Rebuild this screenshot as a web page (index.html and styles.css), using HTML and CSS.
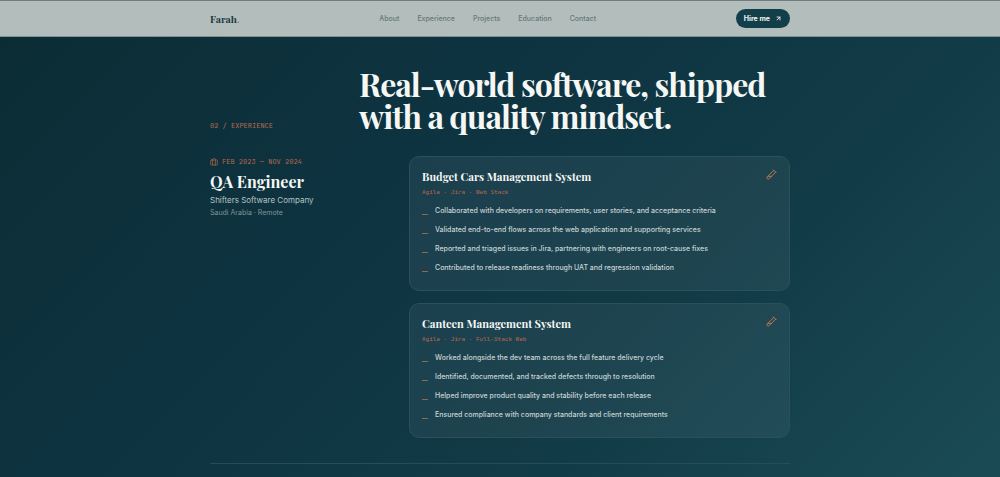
FILE: index.html
```html
<!DOCTYPE html>
<html lang="en">
<head>
    <meta charset="UTF-8">
    <meta name="viewport" content="width=device-width, initial-scale=1.0">
    <title>Farah</title>
    <link rel="stylesheet" href="styles.css">
</head>
<body>

    <header class="topbar">
        <div class="container topbar-inner">
            <a class="logo" href="#">Farah<span>.</span></a>
            <nav class="nav">
                <a href="#about">About</a>
                <a href="#experience">Experience</a>
                <a href="#projects">Projects</a>
                <a href="#education">Education</a>
                <a href="#contact">Contact</a>
            </nav>
            <a class="hire" href="#contact">Hire me
                <svg viewBox="0 0 24 24"><path d="M7 17 17 7M7 7h10v10"/></svg>
            </a>
        </div>
    </header>

    <main class="container" id="experience">
        <div class="section-head">
            <p class="mono">02 / EXPERIENCE</p>
            <h2>Real-world software, shipped<br>with a quality mindset.</h2>
        </div>

        <section class="job">
            <div class="job-info">
                <p class="mono date">
                    <svg viewBox="0 0 24 24"><rect x="2" y="6" width="20" height="15" rx="2"/><path d="M8 21V4a2 2 0 0 1 2-2h4a2 2 0 0 1 2 2v17"/></svg>
                    FEB 2023 — NOV 2024
                </p>
                <h3>QA Engineer</h3>
                <p class="company">Shifters Software Company</p>
                <p class="place">Saudi Arabia · Remote</p>
            </div>

            <div class="cards">
                <article class="card">
                    <div class="card-head">
                        <h4>Budget Cars Management System</h4>
                        <svg class="tube" viewBox="0 0 24 24"><path d="M21 7 6.800 21.200a2.800 2.800 0 0 1-4-4L17 3M16 2l6 6M12 16H4"/></svg>
                    </div>
                    <p class="tags">Agile · Jira · Web Stack</p>
                    <ul>
                        <li>Collaborated with developers on requirements, user stories, and acceptance criteria</li>
                        <li>Validated end-to-end flows across the web application and supporting services</li>
                        <li>Reported and triaged issues in Jira, partnering with engineers on root-cause fixes</li>
                        <li>Contributed to release readiness through UAT and regression validation</li>
                    </ul>
                </article>

                <article class="card">
                    <div class="card-head">
                        <h4>Canteen Management System</h4>
                        <svg class="tube" viewBox="0 0 24 24"><path d="M21 7 6.800 21.200a2.800 2.800 0 0 1-4-4L17 3M16 2l6 6M12 16H4"/></svg>
                    </div>
                    <p class="tags">Agile · Jira · Full-Stack Web</p>
                    <ul>
                        <li>Worked alongside the dev team across the full feature delivery cycle</li>
                        <li>Identified, documented, and tracked defects through to resolution</li>
                        <li>Helped improve product quality and stability before each release</li>
                        <li>Ensured compliance with company standards and client requirements</li>
                    </ul>
                </article>
            </div>
        </section>
    </main>

</body>
</html>
```
FILE: styles.css
```css
* {
    box-sizing: border-box;
}

body, h2, h3, h4, p, ul {
    margin: 0;
    padding: 0;
}

body {
    min-height: 100vh;
    font-family: Inter, sans-serif;
    font-size: 7px;
    color: #c8d4d5;
    background: linear-gradient(135deg, #0b2c33 0%, #0e3340 35%, #113946 65%, #1a4b55 100%);
}

a {
    text-decoration: none;
    color: inherit;
}

svg {
    fill: none;
    stroke: currentColor;
    stroke-width: 2;
    stroke-linecap: round;
    stroke-linejoin: round;
}

h2, h3, h4, .logo {
    font-family: "Playfair Display", "Liberation Serif", serif;
    font-weight: bold;
}

.container {
    width: 58%;
    margin: 0 auto;
}

.topbar {
    background: #b3bdbb;
    border-top: 1px solid #727d7e;
    border-bottom: 1px solid #7d9294;
}

.topbar-inner {
    display: flex;
    align-items: center;
    justify-content: space-between;
    height: 35px;
}

.logo {
    font-size: 10px;
    color: #173a40;
}

.logo span {
    color: #c46f4c;
}

.nav {
    display: flex;
    gap: 18px;
    font-weight: 500;
    color: #64797a;
}

.hire {
    display: flex;
    align-items: center;
    gap: 5px;
    height: 19px;
    padding: 0 8px;
    border-radius: 10px;
    background: #123f49;
    color: #f2f5f4;
    font-weight: 700;
}

.hire svg {
    width: 7px;
    height: 7px;
    stroke-width: 3;
}

.section-head {
    display: grid;
    grid-template-columns: 149px 1fr;
    align-items: end;
    padding-top: 31px;
}

.section-head h2 {
    font-size: 32px;
    line-height: 32px;
    letter-spacing: -1px;
    color: #f5f7f5;
}

.mono {
    font-family: "JetBrains Mono", "DejaVu Sans Mono", monospace;
    line-height: 12px;
    color: #b9694c;
}

.job {
    display: grid;
    grid-template-columns: 1fr 381px;
    padding: 24px 0 25px;
    border-bottom: 1px solid #264c56;
}

.date {
    display: flex;
    align-items: center;
    gap: 4px;
}

.date svg {
    width: 8px;
    height: 8px;
}

.job-info h3 {
    margin-top: 3px;
    font-size: 16px;
    line-height: 22px;
    color: #f5f7f5;
}

.company {
    margin-top: 1px;
    font-size: 8px;
    line-height: 12px;
    color: #b4c3c5;
}

.place {
    margin-top: 1px;
    line-height: 12px;
    color: #7e959a;
}

.cards {
    display: grid;
    gap: 12px;
}

.card {
    padding: 12px 12px 16px;
    border: 1px solid #2b5059;
    border-radius: 10px;
    background: rgba(240, 255, 250, 0.06);
}

.card-head {
    display: flex;
    justify-content: space-between;
}

.card h4 {
    font-size: 11px;
    line-height: 16px;
    color: #f5f7f5;
}

.tube {
    width: 11px;
    height: 11px;
    color: #c77750;
}

.tags {
    margin-top: 2px;
    font-family: "JetBrains Mono", "DejaVu Sans Mono", monospace;
    font-size: 6px;
    line-height: 10px;
    color: #b9694c;
}

.card ul {
    display: grid;
    gap: 7px;
    margin-top: 8px;
    list-style: none;
}

.card li {
    display: flex;
    gap: 7px;
    line-height: 12px;
    font-weight: 500;
}

/* short dash in front of every line */
.card li::before {
    content: "";
    width: 6px;
    height: 1px;
    margin-top: 9px;
    background: #98654f;
}
```
